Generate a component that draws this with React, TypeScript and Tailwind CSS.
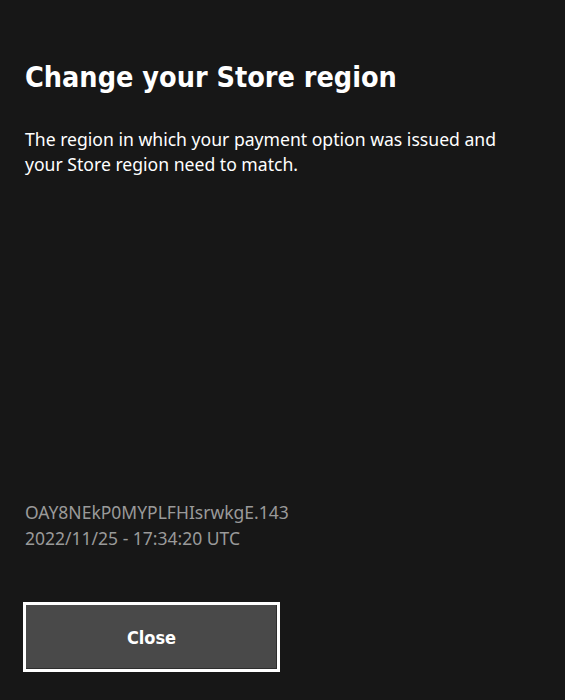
import React from 'react';

const App: React.FC = () => {
  return (
    <div className="w-[565px] h-[700px] bg-[#171717] text-white flex flex-col px-[25px] overflow-hidden">
      <h1 className="mt-[58px] text-[28.5px] leading-[40px] font-bold font-['DejaVu_Sans_Condensed',sans-serif]">
        Change your Store region
      </h1>
      <p className="mt-[29px] w-[500px] text-[17.6px] leading-[25px] font-['Noto_Sans',sans-serif]">
        The region in which your payment option was issued and your Store region need to match.
      </p>
      <div className="mt-auto text-[17.5px] leading-[26px] text-[#9a9a9a] font-['Noto_Sans',sans-serif]">
        <div>OAY8NEkP0MYPLFHIsrwkgE.143</div>
        <div>2022/11/25 - 17:34:20 UTC</div>
      </div>
      <button className="mt-[51px] mb-[28px] ml-[-2px] w-[257px] h-[70px] border-[3px] border-white bg-[#494949] shadow-[inset_-1px_-1px_0_#2e2e2e] text-[18px] font-bold text-white font-['DejaVu_Sans_Condensed',sans-serif]">
        Close
      </button>
    </div>
  );
};

export default App;
